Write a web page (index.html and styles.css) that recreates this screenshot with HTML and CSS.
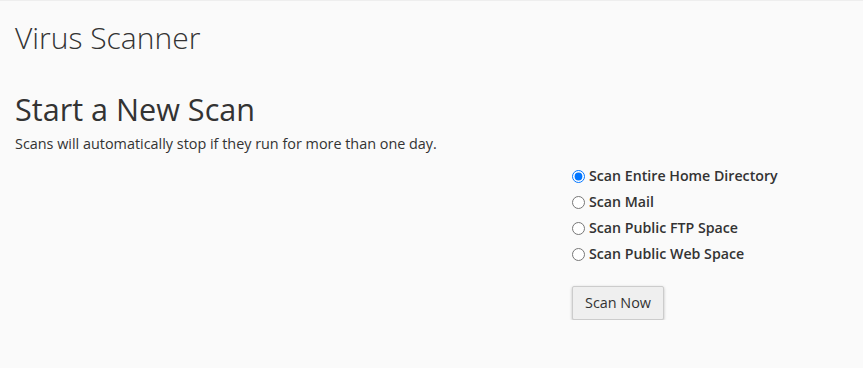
FILE: index.html
```html
<!DOCTYPE html>
<html>
<head>
<meta charset="utf-8">
<link rel="stylesheet" href="styles.css">
</head>
<body>
<div class="page">
  <h1 class="page-title">Virus Scanner</h1>
  <h2 class="section-title">Start a New Scan</h2>
  <p class="desc">Scans will automatically stop if they run for more than one day.</p>
  <form class="scan-form">
    <div class="spacer"></div>
    <div class="options">
      <label class="opt"><input type="radio" name="s" checked> Scan Entire Home Directory</label>
      <label class="opt"><input type="radio" name="s"> Scan Mail</label>
      <label class="opt"><input type="radio" name="s"> Scan Public FTP Space</label>
      <label class="opt"><input type="radio" name="s"> Scan Public Web Space</label>
      <button type="button" class="btn">Scan Now</button>
    </div>
  </form>
</div>
</body>
</html>
```
FILE: styles.css
```css
html, body { margin: 0; padding: 0; background: #fafafa; }
body { font-family: "Open Sans", sans-serif; color: #333; border-top: 1px solid #eee; }
.page { padding: 0 15px; }
.page-title { font-weight: 300; font-size: 30px; margin: 0; padding-top: 17px; line-height: 40px; color: #333; }
.section-title { font-weight: 400; font-size: 30.6px; margin: 31px 0 0; line-height: 40px; color: #333; }
.desc { font-size: 14.4px; margin: 5px 0 0; line-height: 20px; }
.scan-form { display: flex; margin-top: 9px; }
.spacer { width: 557px; flex: none; }
.options { display: flex; flex-direction: column; align-items: flex-start; }
.opt { font-weight: 600; font-size: 14.2px; line-height: 26px; display: flex; align-items: center; gap: 4px; }
.opt input { margin: 0; width: 13px; height: 13px; }
.btn { margin-top: 19px; font-family: "Open Sans", sans-serif; font-size: 14.4px; line-height: 20px; color: #333; background: #efefef; border: 1px solid #ccc; border-radius: 2px; padding: 6px 12px; box-shadow: 0 1px 3px rgba(0,0,0,0.25); }
```
